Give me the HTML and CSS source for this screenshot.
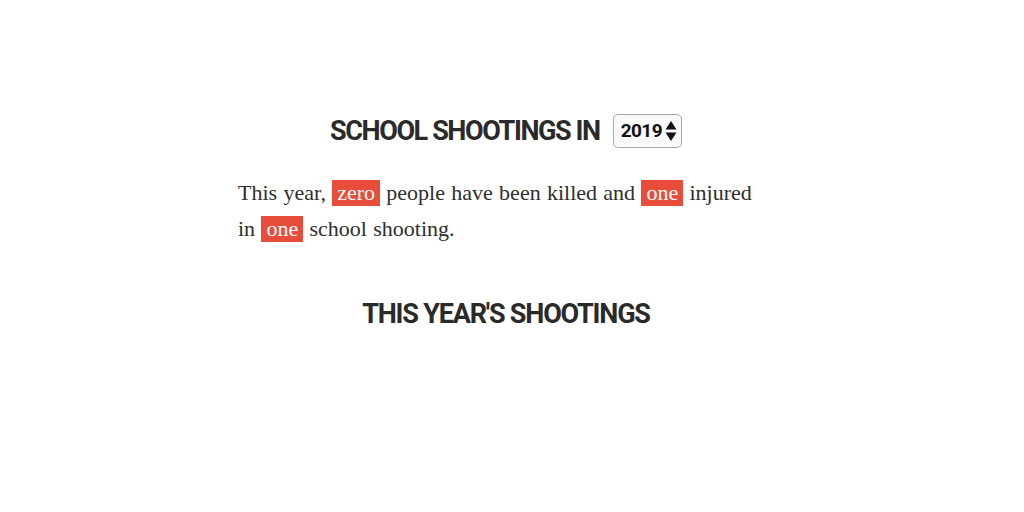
FILE: index.html
```html
<!DOCTYPE html>
<html lang="en">

<head>
    <meta charset="UTF-8">
    <meta name="viewport" content="width=device-width, initial-scale=1.0">
    <title>School Shootings</title>
    <link rel="stylesheet" href="styles.css">
</head>

<body>

    <main class="tracker">
        <h2 class="tracker-title">
            School shootings in
            <span class="year-select">
                <span class="year-value">2019</span>
                <svg class="year-arrows" width="12" height="22" viewBox="0 0 12 22">
                    <path d="M6 1 L11.5 9.5 L0.5 9.5 Z" fill="#111"/>
                    <path d="M6 21 L11.5 12.5 L0.5 12.5 Z" fill="#111"/>
                </svg>
            </span>
        </h2>

        <p class="summary">
            This year, <span class="stat">zero</span> people have been killed and <span class="stat">one</span> injured
            in <span class="stat">one</span> school shooting.
        </p>

        <h2 class="tracker-title list-title">This year's shootings</h2>
    </main>

</body>

</html>
```

FILE: styles.css
```css
* {
    margin: 0;
    padding: 0;
    box-sizing: border-box;
}

body {
    background: #fff;
    color: #333;
    padding-right: 12px;
}

.tracker {
    width: 536px;
    margin: 0 auto;
    padding-top: 113px;
}

.tracker-title {
    font-family: Roboto, "Liberation Sans", sans-serif;
    font-weight: 700;
    font-size: 27px;
    letter-spacing: -1.4px;
    text-transform: uppercase;
    color: #2a2a2a;
    text-align: center;
    display: flex;
    align-items: center;
    justify-content: center;
    gap: 13px;
    line-height: 36px;
}

.year-select {
    display: inline-flex;
    align-items: center;
    gap: 3px;
    height: 34px;
    padding: 0 4px 0 7px;
    border: 1px solid #a9a9a9;
    border-radius: 5px;
    background: #f9f9f9;
    letter-spacing: -0.6px;
}

.year-value {
    font-size: 19px;
    color: #111;
}

.year-arrows {
    display: block;
}

.summary {
    font-family: "Liberation Serif", serif;
    font-size: 22px;
    line-height: 36px;
    word-spacing: 0.8px;
    color: #2e2e2e;
    margin-top: 26px;
    max-width: 524px;
}

.stat {
    display: inline-block;
    line-height: 26px;
    background: #e84c3b;
    color: #fff;
    padding: 0 5px;
}

.list-title {
    margin-top: 49px;
    letter-spacing: -1.2px;
}
```
